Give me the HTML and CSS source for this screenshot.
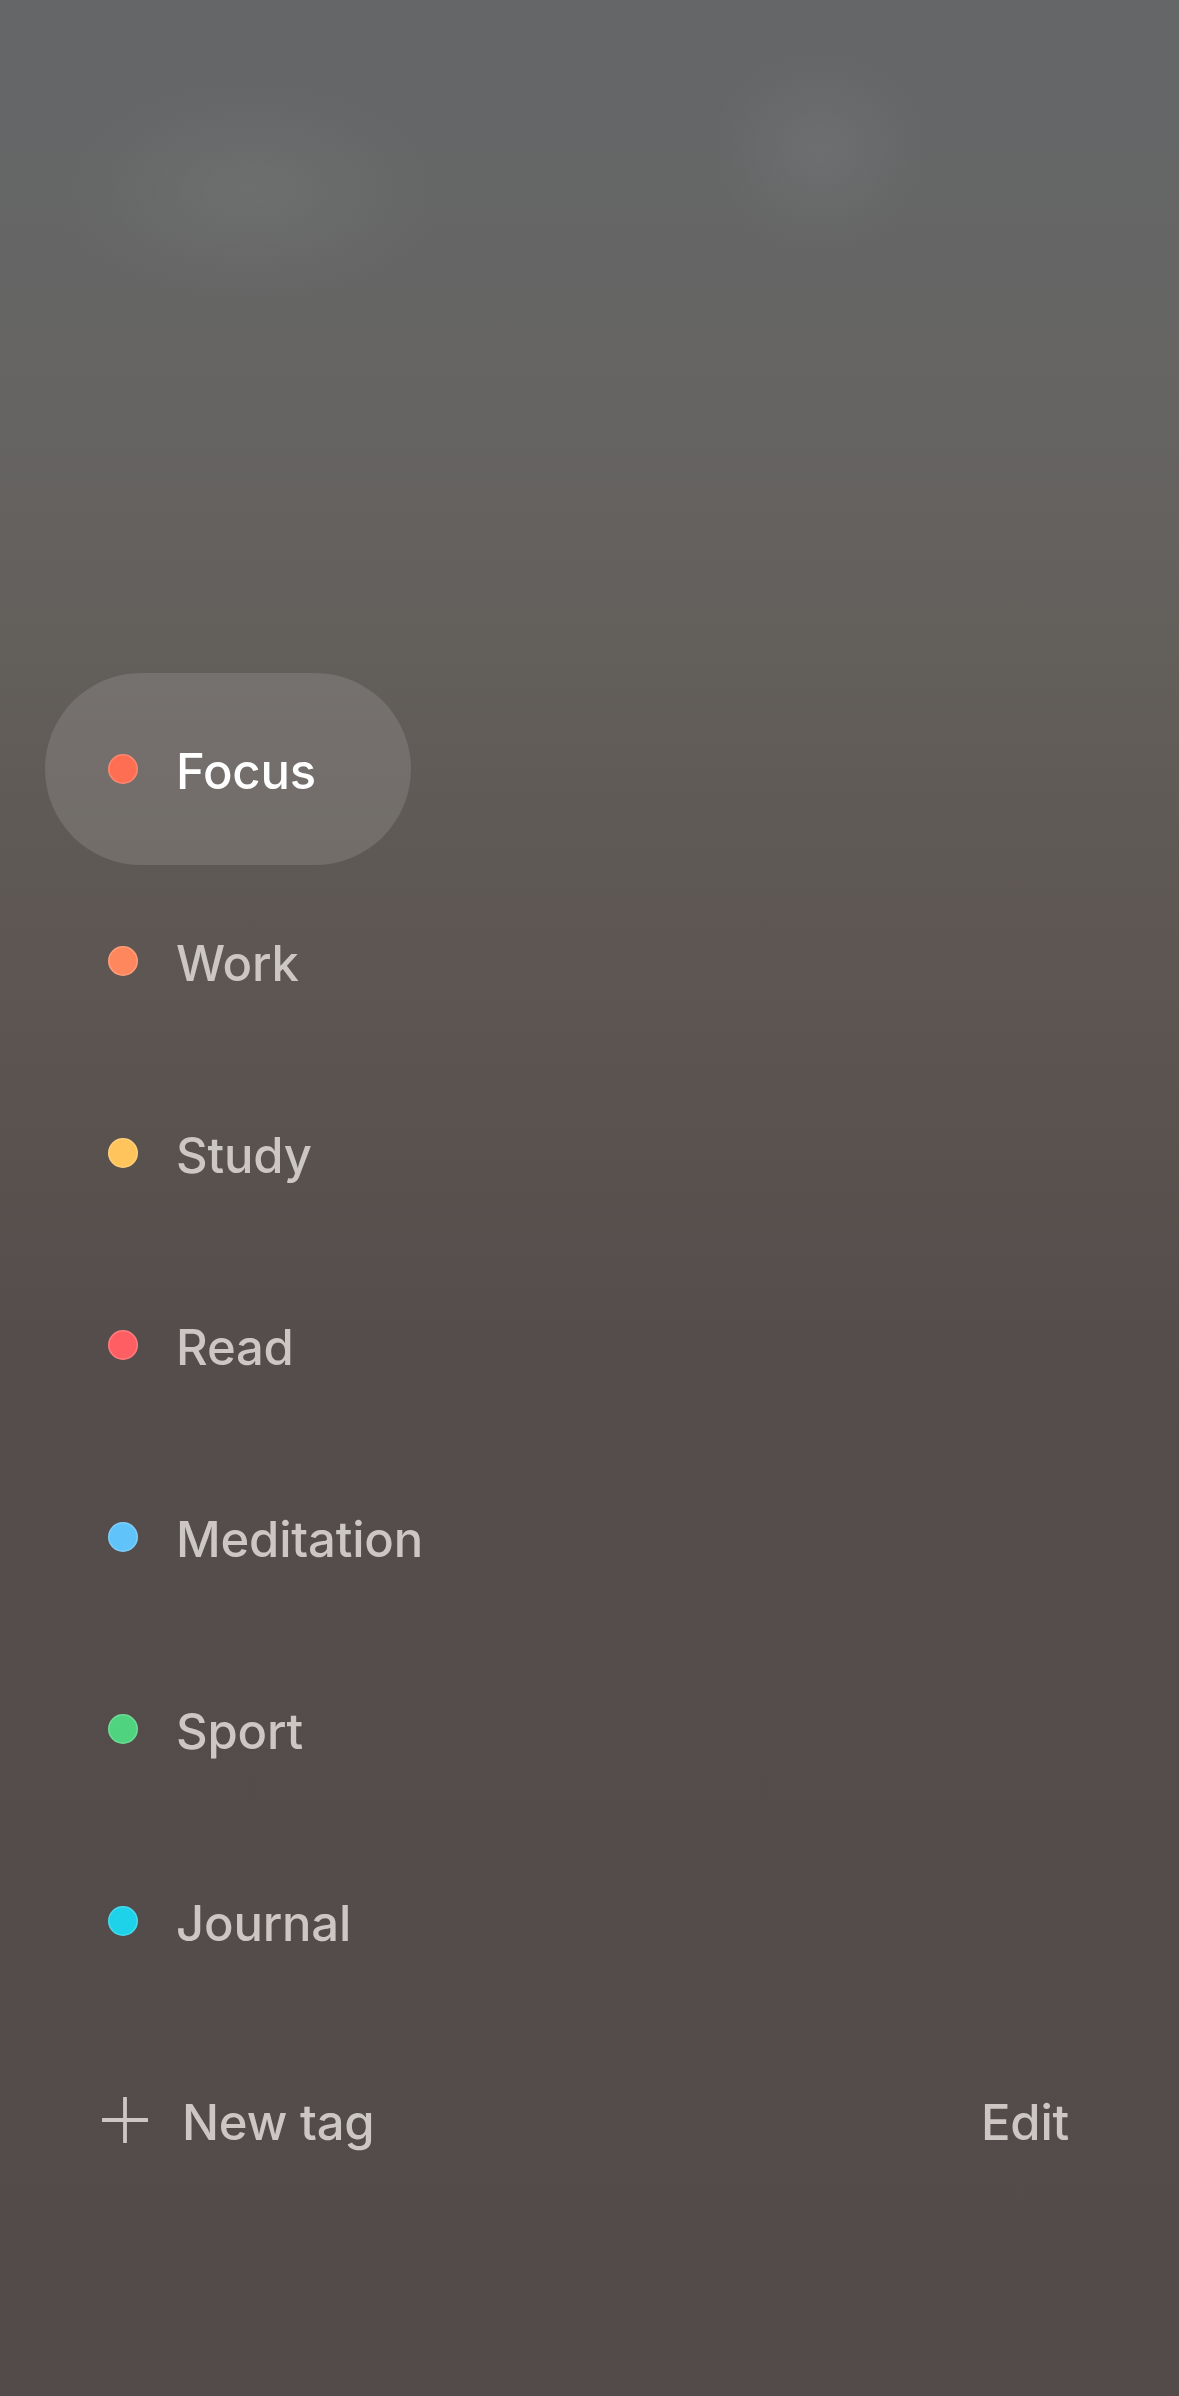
FILE: index.html
```html
<!DOCTYPE html>
<html>
  <head>
    <title>Tags</title>
    <meta charset="utf-8">
    <link rel="stylesheet" href="styles.css">
  </head>
  <body>
    <main>
      <ul class="tags">
        <li class="tag active"><span class="dot focus"></span><span class="name">Focus</span></li>
        <li class="tag"><span class="dot work"></span><span class="name">Work</span></li>
        <li class="tag"><span class="dot study"></span><span class="name">Study</span></li>
        <li class="tag"><span class="dot read"></span><span class="name">Read</span></li>
        <li class="tag"><span class="dot meditation"></span><span class="name">Meditation</span></li>
        <li class="tag"><span class="dot sport"></span><span class="name">Sport</span></li>
        <li class="tag"><span class="dot journal"></span><span class="name">Journal</span></li>
      </ul>

      <div class="actions">
        <button class="new-tag">
          <svg class="plus" width="46" height="46" viewBox="0 0 46 46">
            <path d="M23 1 V45 M1 23 H45" stroke="currentColor" stroke-width="3.8" stroke-linecap="round" fill="none"/>
          </svg>
          <span>New tag</span>
        </button>
        <button class="edit">Edit</button>
      </div>
    </main>
  </body>
</html>
```

FILE: styles.css
```css
:root {
  --color-text: rgb(204, 199, 195);
  --color-text-active: rgb(255, 255, 255);
  --color-pill: rgba(255, 255, 255, 0.12);
}
html, body {
  margin: 0;
  height: 100%;
}
body {
  font-family: Inter, "Liberation Sans", sans-serif;
  font-size: 49px;
  font-weight: 450;
  letter-spacing: -0.2px;
  color: var(--color-text);
  background-color: rgb(83, 75, 74);
  background-image:
    radial-gradient(ellipse 190px 110px at 250px 190px, rgba(125, 127, 127, 0.35), rgba(125, 127, 127, 0)),
    radial-gradient(ellipse 110px 100px at 820px 150px, rgba(125, 127, 129, 0.35), rgba(125, 127, 129, 0)),
    linear-gradient(to bottom,
      rgb(100, 102, 104) 0px,
      rgb(102, 101, 100) 360px,
      rgb(99, 95, 91) 640px,
      rgb(93, 86, 82) 960px,
      rgb(85, 77, 75) 1350px,
      rgb(83, 75, 74) 2396px);
  background-repeat: no-repeat;
  min-height: 2396px;
}
main {
  padding: 673px 0 0 0;
}
ul.tags {
  list-style: none;
  margin: 0;
  padding: 0 0 0 45px;
}
li.tag {
  display: flex;
  align-items: center;
  box-sizing: border-box;
  width: 366px;
  height: 192px;
  padding: 0 0 0 63px;
  white-space: nowrap;
  border-radius: 96px;
}
li.tag.active {
  background-color: var(--color-pill);
  color: var(--color-text-active);
}
.dot {
  display: block;
  flex: none;
  width: 30px;
  height: 30px;
  border-radius: 50%;
  margin-right: 38px;
  box-shadow: inset 0 0 0 1.5px rgba(255, 255, 255, 0.18);
}
.dot.focus { background-color: rgb(253, 110, 83); }
.dot.work { background-color: rgb(255, 135, 93); }
.dot.study { background-color: rgb(255, 196, 91); }
.dot.read { background-color: rgb(255, 95, 99); }
.dot.meditation { background-color: rgb(96, 195, 249); }
.dot.sport { background-color: rgb(79, 211, 127); }
.dot.journal { background-color: rgb(30, 210, 234); }
.name {
  line-height: 1;
  padding-top: 4px;
}
div.actions {
  display: flex;
  align-items: center;
  justify-content: space-between;
  height: 192px;
  margin-top: 7px;
  padding: 0 110px 0 102px;
}
button {
  font: inherit;
  letter-spacing: inherit;
  color: inherit;
  background: none;
  border: 0;
  padding: 0;
  cursor: pointer;
  line-height: 1;
}
button.new-tag {
  display: flex;
  align-items: center;
}
button.new-tag span,
button.edit {
  padding-top: 4px;
}
.plus {
  display: block;
  margin-right: 34px;
}
```
